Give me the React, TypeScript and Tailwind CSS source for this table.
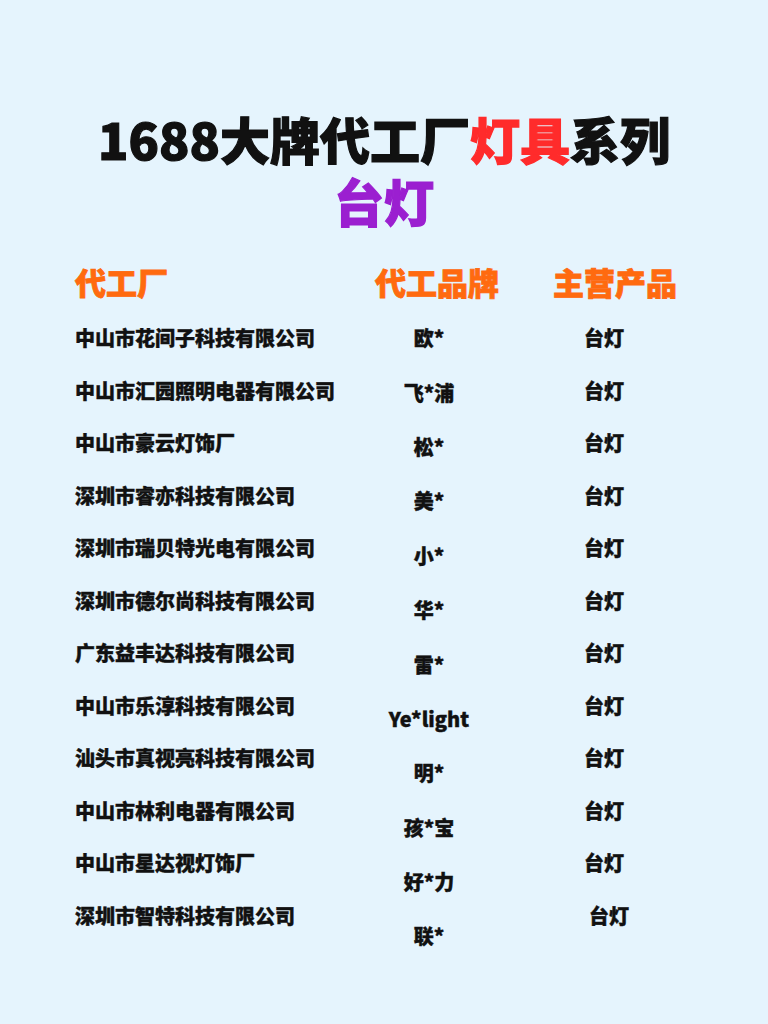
import React from "react";

const factories = [
  "中山市花间子科技有限公司",
  "中山市汇园照明电器有限公司",
  "中山市豪云灯饰厂",
  "深圳市睿亦科技有限公司",
  "深圳市瑞贝特光电有限公司",
  "深圳市德尔尚科技有限公司",
  "广东益丰达科技有限公司",
  "中山市乐淳科技有限公司",
  "汕头市真视亮科技有限公司",
  "中山市林利电器有限公司",
  "中山市星达视灯饰厂",
  "深圳市智特科技有限公司",
];

const brands = ["欧*", "飞*浦", "松*", "美*", "小*", "华*", "雷*", "Ye*light", "明*", "孩*宝", "好*力", "联*"];

const font = { fontFamily: '"Noto Sans CJK SC", "Noto Sans", sans-serif' };

export default function App() {
  return (
    <div className="min-h-[1024px] w-[768px] bg-[#e5f4fd] text-[#111]" style={font}>
      {/* title */}
      <div className="pt-[113px] text-center font-black text-[50px] leading-[50px] [-webkit-text-stroke:1.2px_currentColor]">
        <div>
          1688大牌代工厂<span className="text-[#ff2b2b]">灯具</span>系列
        </div>
        <div className="mt-[12px] text-[#9b1fd0]">台灯</div>
      </div>

      {/* headers */}
      <div className="mt-[37px] flex h-[40px] items-center pl-[75px] text-[31px] font-black text-[#ff6a0f] whitespace-nowrap [-webkit-text-stroke:0.8px_currentColor]">
        <div className="w-[300px]">代工厂</div>
        <div className="w-[178px]">代工品牌</div>
        <div>主营产品</div>
      </div>

      {/* rows */}
      <div className="mt-[10px] flex pl-[75px] text-[20px] font-black whitespace-nowrap [-webkit-text-stroke:0.4px_currentColor]">
        <div className="flex w-[300px] flex-col">
          {factories.map((f) => (
            <div key={f} className="flex h-[52.5px] items-center">
              {f}
            </div>
          ))}
        </div>
        <div className="-mt-[1px] flex w-[108px] flex-col">
          {brands.map((b) => (
            <div key={b} className="flex h-[54.4px] items-center justify-center">
              {b}
            </div>
          ))}
        </div>
        <div className="ml-[69px] flex w-[104px] flex-col">
          {factories.map((f, i) => (
            <div
              key={f}
              className={i === factories.length - 1 ? "flex h-[52.5px] items-center justify-center pl-[10px]" : "flex h-[52.5px] items-center justify-center"}
            >
              台灯
            </div>
          ))}
        </div>
      </div>
    </div>
  );
}
